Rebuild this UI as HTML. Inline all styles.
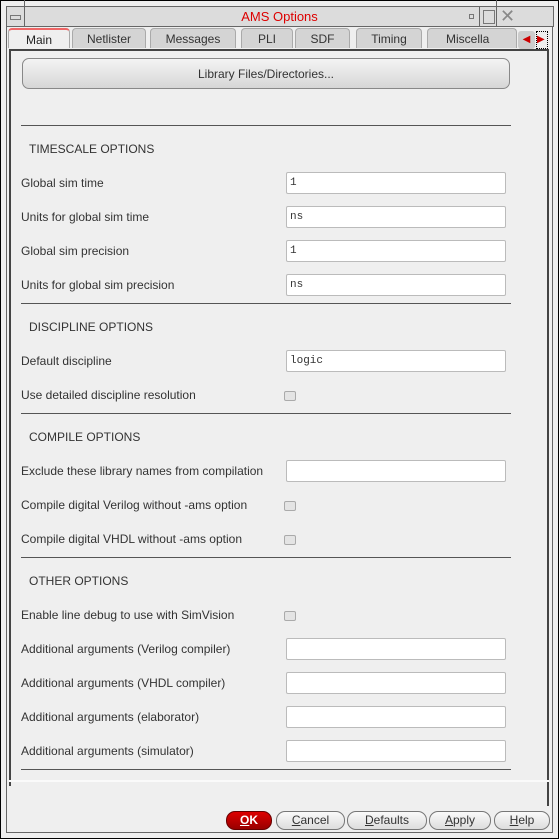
<!DOCTYPE html><html><head><style>
body{margin:0;width:559px;height:839px;background:#efefef;position:relative;overflow:hidden;font-family:"Liberation Sans",sans-serif;font-size:12px;color:#333}
.a{position:absolute}
.l{position:absolute;left:21px;transform:translateY(-50%)}
.f{position:absolute;left:286px;width:220px;height:22px;background:#fff;border:1px solid #bbb;border-radius:2px;box-sizing:border-box;font-family:"Liberation Mono",monospace;font-size:11px;padding:4px 3px}
.s{position:absolute;left:21px;width:490px;height:1px;background:#555}
.c{position:absolute;left:284px;width:10px;height:8px;border:1px solid #aaa;background:#e4e4e4;border-radius:2px}
.tab{position:absolute;top:28px;height:20px;background:#d4d4d4;border:1px solid #aaa;border-bottom:none;border-radius:4px 4px 0 0;box-sizing:border-box;text-align:center;font-size:12px;line-height:21px;color:#333}
.b{position:absolute;top:811px;height:19px;border:1px solid #777;border-radius:9px;background:linear-gradient(#fafafa,#ddd);box-sizing:border-box;text-align:center;line-height:17px;font-size:12px}
</style></head><body>
<div class="a" style="left:0;top:0;width:557px;height:837px;border:1px solid #000"></div>
<div class="a" style="left:6px;top:6px;width:547px;height:827px;border:1px solid #666;box-sizing:border-box"></div>
<div class="a" style="left:6px;top:6px;width:548px;height:21px;background:#dcdcdc;border:1px solid #666;box-sizing:border-box"></div>
<div class="a" style="left:24px;top:0;width:1px;height:27px;background:#666"></div>
<div class="a" style="left:10px;top:15px;width:9px;height:3px;border:1px solid #777"></div>
<div class="a" style="left:0;top:9px;width:559px;text-align:center;color:#d00;font-size:13px">AMS Options</div>
<div class="a" style="left:479px;top:6px;width:1px;height:21px;background:#666"></div>
<div class="a" style="left:496px;top:0;width:1px;height:27px;background:#666"></div>
<div class="a" style="left:469px;top:14px;width:3px;height:3px;border:1px solid #777"></div>
<div class="a" style="left:483px;top:10px;width:10px;height:12px;border:1px solid #777"></div>
<div class="a" style="left:500px;top:6px;color:#888;font-size:18px;line-height:20px">✕</div>
<div class="tab" style="left:8px;width:62px;background:#efefef;border-top:2px solid #e66;color:#222">Main</div>
<div class="tab" style="left:72px;width:74px">Netlister</div>
<div class="tab" style="left:150px;width:86px">Messages</div>
<div class="tab" style="left:241px;width:52px">PLI</div>
<div class="tab" style="left:295px;width:55px">SDF</div>
<div class="tab" style="left:356px;width:66px">Timing</div>
<div class="tab" style="left:427px;width:90px;text-align:left;padding-left:18px">Miscella</div>
<div class="a" style="left:518px;top:31px;width:17px;height:18px;background:#ccc;border-radius:3px;color:#c00;font-size:10px;text-align:center;line-height:18px">◀</div>
<div class="a" style="left:536px;top:31px;width:10px;height:16px;border:1px dotted #000;color:#c00;font-size:10px;line-height:16px">▶</div>
<div class="a" style="left:9px;top:49px;width:540px;height:737px;border-left:2px solid #444;border-top:2px solid #444;border-right:2px solid #444;box-sizing:border-box"></div>
<div class="a" style="left:547px;top:786px;width:2px;height:20px;background:#444"></div>
<div class="a" style="left:22px;top:58px;width:488px;height:31px;border:1px solid #888;border-radius:7px;background:linear-gradient(#f4f4f4,#d6d6d6);box-sizing:border-box;text-align:center;line-height:30px;color:#333">Library Files/Directories...</div>
<div class="s" style="top:125px"></div>
<div class="l" style="left:29px;top:149px">TIMESCALE OPTIONS</div>
<div class="l" style="top:183px">Global sim time</div><div class="f" style="top:172px">1</div>
<div class="l" style="top:217px">Units for global sim time</div><div class="f" style="top:206px">ns</div>
<div class="l" style="top:251px">Global sim precision</div><div class="f" style="top:240px">1</div>
<div class="l" style="top:285px">Units for global sim precision</div><div class="f" style="top:274px">ns</div>
<div class="s" style="top:303px"></div>
<div class="l" style="left:29px;top:327px">DISCIPLINE OPTIONS</div>
<div class="l" style="top:361px">Default discipline</div><div class="f" style="top:350px">logic</div>
<div class="l" style="top:395px">Use detailed discipline resolution</div><div class="c" style="top:391px"></div>
<div class="s" style="top:413px"></div>
<div class="l" style="left:29px;top:437px">COMPILE OPTIONS</div>
<div class="l" style="top:471px">Exclude these library names from compilation</div><div class="f" style="top:460px"></div>
<div class="l" style="top:505px">Compile digital Verilog without -ams option</div><div class="c" style="top:501px"></div>
<div class="l" style="top:539px">Compile digital VHDL without -ams option</div><div class="c" style="top:535px"></div>
<div class="s" style="top:557px"></div>
<div class="l" style="left:29px;top:581px">OTHER OPTIONS</div>
<div class="l" style="top:615px">Enable line debug to use with SimVision</div><div class="c" style="top:611px"></div>
<div class="l" style="top:649px">Additional arguments (Verilog compiler)</div><div class="f" style="top:638px"></div>
<div class="l" style="top:683px">Additional arguments (VHDL compiler)</div><div class="f" style="top:672px"></div>
<div class="l" style="top:717px">Additional arguments (elaborator)</div><div class="f" style="top:706px"></div>
<div class="l" style="top:751px">Additional arguments (simulator)</div><div class="f" style="top:740px"></div>
<div class="s" style="top:769px"></div>
<div class="a" style="left:9px;top:780px;width:540px;height:2px;background:#fafafa"></div>
<div class="b" style="left:226px;width:46px;background:linear-gradient(#d00,#900);color:#fff;font-weight:bold;border-color:#600"><u>O</u>K</div>
<div class="b" style="left:276px;width:69px"><u>C</u>ancel</div>
<div class="b" style="left:347px;width:80px"><u>D</u>efaults</div>
<div class="b" style="left:429px;width:62px"><u>A</u>pply</div>
<div class="b" style="left:494px;width:56px"><u>H</u>elp</div>
</body></html>
